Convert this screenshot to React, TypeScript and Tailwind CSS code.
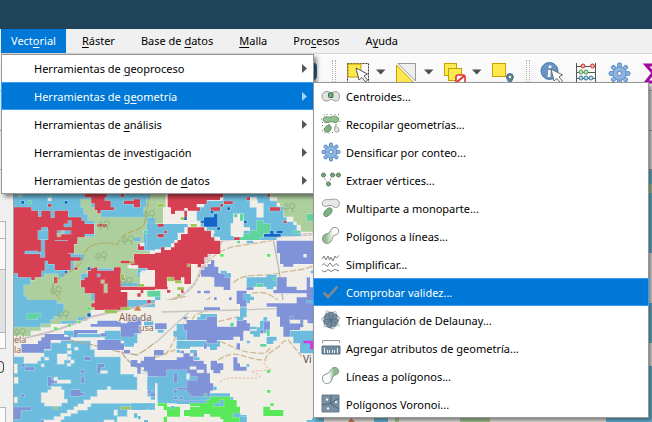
import React from 'react';
import { clsx } from 'clsx';

interface MenuEntry {
  label: string;
  // index of the underlined mnemonic letter
  at: number;
}

const MENUS: MenuEntry[] = [
  { label: 'Vectorial', at: 4 },
  { label: 'Ráster', at: 0 },
  { label: 'Base de datos', at: 8 },
  { label: 'Malla', at: 0 },
  { label: 'Procesos', at: 3 },
  { label: 'Ayuda', at: 1 },
];

const VECTOR_ITEMS: MenuEntry[] = [
  { label: 'Herramientas de geoproceso', at: 16 },
  { label: 'Herramientas de geometría', at: 17 },
  { label: 'Herramientas de análisis', at: 16 },
  { label: 'Herramientas de investigación', at: 16 },
  { label: 'Herramientas de gestión de datos', at: 27 },
];

const GEOMETRY_ITEMS: { label: string; icon: string }[] = [
  { label: 'Centroides...', icon: 'centroid' },
  { label: 'Recopilar geometrías...', icon: 'collect' },
  { label: 'Densificar por conteo...', icon: 'gear' },
  { label: 'Extraer vértices...', icon: 'vertices' },
  { label: 'Multiparte a monoparte...', icon: 'multipart' },
  { label: 'Polígonos a líneas...', icon: 'polyToLine' },
  { label: 'Simplificar...', icon: 'simplify' },
  { label: 'Comprobar validez...', icon: 'check' },
  { label: 'Triangulación de Delaunay...', icon: 'delaunay' },
  { label: 'Agregar atributos de geometría...', icon: 'ruler' },
  { label: 'Líneas a polígonos...', icon: 'lineToPoly' },
  { label: 'Polígonos Voronoi...', icon: 'voronoi' },
];

const Mnemonic: React.FC<MenuEntry> = ({ label, at }) => (
  <span>
    {label.slice(0, at)}
    <span className="underline underline-offset-2">{label[at]}</span>
    {label.slice(at + 1)}
  </span>
);

const TEETH = [0, 45, 90, 135, 180, 225, 270, 315];

const Gear = () => (
  <g fill="#8fb4e0" stroke="#4a7ebb" strokeWidth={0.8}>
    {TEETH.map(a => (
      <path key={a} d="M8.4 5L8.4 1.5Q10 0 11.600 1.500L11.600 5Z" transform={`rotate(${a} 10 10)`} />
    ))}
    <circle cx={10} cy={10} r={5.6} />
    <circle cx={10} cy={10} r={5.4} stroke="none" />
    <circle cx={10} cy={10} r={1.8} fill="#fff" />
  </g>
);

const ICONS: Record<string, React.ReactNode> = {
  centroid: (
    <>
      <path d="M1 10.500C1 7.500 3 5.500 6 5.500C8 5.500 9 6.500 10.500 6.500C12 6.500 13 5.500 15 5.500C17 5.500 18.500 7.500 18.500 10.500C18.500 13.500 17 15 15 15C13 15 12 13.500 10.500 13.500C9 13.500 8 15 6 15C3 15 1 13.500 1 10.500Z" fill="#e3e3e1" stroke="#999" />
      <rect x={7.5} y={7} width={4.5} height={4.5} rx={1} fill="#77b07c" stroke="#406b44" />
    </>
  ),
  collect: (
    <>
      <path d="M3 3.500C5 1.500 7 4 10 3C13 1.500 17 2 17.500 5C18 8.500 14 9.500 12 8C10 7 8 8.500 5 8.500C2 8 1.500 5 3 3.500Z" fill="#8fc08f" stroke="#698b69" />
      <path d="M5 12.500C8 10 11 12 10 15C9 18 6 19 4 17.500C2.500 16 3 14 5 12.500Z" fill="#7db37f" stroke="#698b69" />
      <path d="M14 12C16 11.500 18.500 15 18 17C17 18.500 14 18.500 13.500 16.500Z" fill="#e3e3e1" stroke="#999" />
      <path d="M3 .5v1M6 0v1M10 0v1M14 0v1M17 1l1-1M18.500 7l1 1M0 5h1M1 9l1-1M15 10v1M8 10v1M2 12l-1-1M1 17h1M3 19.500l1-1M8 19.500v-1M11 18l1 1" stroke="#777" />
    </>
  ),
  gear: <Gear />,
  vertices: (
    <g fill="#77ab7b" stroke="#57755a">
      <circle cx={2.5} cy={5} r={2} />
      <circle cx={11.5} cy={5} r={2} />
      <circle cx={17.5} cy={5} r={2} />
      <circle cx={7.5} cy={14} r={2} />
      <path d="M3.500 8l1 2M5.500 11v1M9 11l1-3M14 5h1" stroke="#aaa" />
    </g>
  ),
  multipart: (
    <>
      <path d="M2 3.500C4 .5 7 2 10 1.500C13 .5 17 1 18 4C19 7 17 10 14.500 9.500C12 9 11 7 8 7.500C5 8.500 2.500 9 1.500 7C1 5.500 1 4.500 2 3.500Z" fill="#e8e8e6" stroke="#999" />
      <path d="M5 12C7 9.500 10 9 11 11.500C11.500 14.500 8 18.500 5 18.500C2 18.500 2 14.500 5 12Z" fill="#7db37f" stroke="#698b69" />
    </>
  ),
  polyToLine: (
    <>
      <defs>
        <linearGradient id="ptl"><stop offset=".2" stopColor="#8dbb8d" /><stop offset=".7" stopColor="#fff" /></linearGradient>
      </defs>
      <path d="M3 9C6 7 8 8 9.500 4.500C11 1 15 .5 17 3C18.500 5.500 17.500 8.500 14 9C11 9.500 12 13 10 15.500C7.500 18.500 3 18 2 15C1 12.500 1.500 10.500 3 9Z" fill="url(#ptl)" stroke="#8a8f8a" />
    </>
  ),
  simplify: (
    <g fill="none" stroke="#7a7a7a">
      <path d="M1 5L3 2L5 6L7 2L8.500 6L10 3L12 7L14 2L15.500 4L18 1.500" />
      <path d="M1 11.500L3 9.500L6 12.500L9 9L12 12.500L15 9.500L18 12" />
      <path d="M1 16.500L4 18L7 15.500L10 17.500L14 15.500L18 17" />
    </g>
  ),
  check: <path d="M2.500 10.500L7 15L16.500 4.500" fill="none" stroke="#87878b" strokeWidth={2.6} />,
  delaunay: (
    <>
      <path d="M6 2L14 2.500L18 8L16 15L11 18.500L4 16L2 9Z" fill="#728b9e" stroke="#5d7688" />
      <path d="M6 2L10 10L18 8M2 9L10 10L11 18.500M10 10L4 16M10 10L14 2.500M10 10L16 15" fill="none" stroke="#526a7d" strokeWidth={0.8} />
      <g fill="#eee" stroke="#aaa" strokeWidth={0.6}>
        <circle cx={6} cy={2} r={1.3} /><circle cx={14} cy={2.5} r={1.3} /><circle cx={17.5} cy={8} r={1.3} />
        <circle cx={17} cy={15} r={1.3} /><circle cx={12} cy={18} r={1.3} /><circle cx={4} cy={16} r={1.3} /><circle cx={1.8} cy={9} r={1.3} />
      </g>
    </>
  ),
  ruler: (
    <>
      <path d="M1.500 5V2.500H18.500V5" fill="none" stroke="#999" />
      <path d="M1 8H19V16H1Z" fill="#728b9e" stroke="#5d7688" />
      <path d="M3.500 15v-5M6.500 15v-3M8.500 15v-3M11.500 15v-3M13.500 15v-3M16.500 15v-5" stroke="#eee" />
    </>
  ),
  lineToPoly: (
    <>
      <defs>
        <linearGradient id="ltp"><stop offset=".4" stopColor="#fff" /><stop offset=".7" stopColor="#8dbb8d" /></linearGradient>
      </defs>
      <path d="M3 9C6 7 8 8 9.500 4.500C11 1 15 .5 17 3C18.500 5.500 17.500 8.500 14 9C11 9.500 12 13 10 15.500C7.500 18.500 3 18 2 15C1 12.500 1.500 10.500 3 9Z" fill="url(#ltp)" stroke="#8a8f8a" />
    </>
  ),
  voronoi: (
    <>
      <path d="M1 1H18V18H1Z" fill="#768fa2" stroke="#6a8090" />
      <path d="M10 1L9.500 9.500L1 11M9.500 9.500L18 15M9.500 9.500L18 4" fill="none" stroke="#4e6577" />
      <g fill="#eee"><circle cx={6} cy={5.5} r={1.2} /><circle cx={15} cy={8} r={1.2} /><circle cx={7} cy={14.5} r={1.2} /></g>
    </>
  ),
};

const ToolButton: React.FC<{ label: string; children: React.ReactNode; wide?: boolean }> = ({ label, children, wide }) => (
  <button type="button" aria-label={label} className={clsx('flex items-center', wide ? 'w-12 gap-1.5' : 'w-8')}>
    <svg width={24} height={24} viewBox="0 0 24 24" className="shrink-0">{children}</svg>
    {wide && (
      <svg width={10} height={6} viewBox="0 0 10 6" className="shrink-0"><path d="M0 0.500H9.500L4.750 5.500Z" fill="#4d4d4d" /></svg>
    )}
  </button>
);

const Grip = () => <div className="h-6 w-1 border-x border-dotted border-[#b0b0b0]" />;

const POINTER = 'M10 8L13 20L16 17.500L19.500 22L21.500 20L18 16L21.500 14Z';

const Toolbar = () => (
  <div className="border-t border-[#d5d5d5] bg-linear-to-b from-[#fbfbfb] to-[#efefef]">
    <div className="flex h-[37px] items-center overflow-hidden border-b border-[#bbb] pl-[307px]">
      <svg width={20} height={24} viewBox="0 0 20 24" className="shrink-0">
        <path d="M2 3H7Q10 3 10 7V15Q10 20 6 20H2Z" fill="#346391" />
      </svg>
      <div className="flex items-center pl-[5px]">
        <Grip />
        <div className="flex items-center pl-2.5">
          <ToolButton label="Seleccionar" wide>
            <rect x={1.5} y={3.5} width={21} height={19} fill="none" stroke="#333" strokeDasharray="2 1" />
            <rect x={2} y={4} width={13} height={13} fill="#fce94f" stroke="#c4a000" />
            <path d={POINTER} fill="#fff" stroke="#555" />
          </ToolButton>
          <ToolButton label="Invertir" wide>
            <path d="M4 3.500H21.500V21Z" fill="#eee" stroke="#999" />
            <path d="M2.500 5V23H20Z" fill="#fce94f" stroke="#c4a000" />
          </ToolButton>
          <ToolButton label="Deseleccionar" wide>
            <rect x={2.5} y={3.5} width={12} height={12} fill="#fce94f" stroke="#c4a000" />
            <rect x={6.5} y={8.5} width={13} height={12} fill="#fce94f" stroke="#c4a000" />
            <rect x={14} y={15} width={9} height={9} rx={2} fill="#fff" stroke="#d33" strokeWidth={1.6} />
            <path d="M15 22L22 16" stroke="#d33" strokeWidth={2} />
          </ToolButton>
          <ToolButton label="Seleccionar por localización">
            <rect x={2.5} y={3.5} width={13} height={13} fill="#fce94f" stroke="#c4a000" />
            <path d="M20 24C18 20 16.500 19 16.500 17A3.300 3.300 0 0 1 23.300 17C23.300 19 22 20 20 24Z" fill="#5d8295" stroke="#45697b" />
            <circle cx={20} cy={17} r={1.2} fill="#fff" />
          </ToolButton>
        </div>
      </div>
      <div className="flex items-center gap-[2px] pl-1">
        <Grip />
        <div className="flex items-center gap-[2px] pl-2">
          <ToolButton label="Identificar">
            <circle cx={9.5} cy={11} r={8.5} fill="#6793c5" stroke="#4878ae" />
            <path d="M10 5.500v2.500M9.500 10L9 17" stroke="#fff" strokeWidth={2.6} />
            <path d={POINTER} fill="#fff" stroke="#666" transform="translate(1 1)" />
          </ToolButton>
          <ToolButton label="Calculadora">
            <path d="M2.500 3V24M21.500 3V24M2 6.500H22M2 12.500H22M2 18.500H22M2 22.500H22" stroke="#555" fill="none" />
            <g stroke="#c33" fill="#f3b0a8"><circle cx={9} cy={6} r={2} /><circle cx={18.5} cy={6} r={2} /></g>
            <g stroke="#4a9a4a" fill="#c6e6c0"><circle cx={7} cy={12} r={2} /><circle cx={12} cy={12} r={2} /></g>
            <g stroke="#3a77a0" fill="#bcd6ea"><circle cx={7} cy={18} r={2} /><circle cx={12} cy={18} r={2} /><circle cx={17} cy={18} r={2} /></g>
          </ToolButton>
          <ToolButton label="Caja de herramientas">
            <g transform="translate(0 2) scale(1.150)"><Gear /></g>
          </ToolButton>
          <ToolButton label="Estadísticas">
            <path d="M20 5H4L11 13L4 22H20" fill="none" stroke="#a20aa2" strokeWidth={3} />
          </ToolButton>
        </div>
      </div>
    </div>
    <div className="h-10 border-b border-[#aaa] bg-[#ededed]" />
    <div className="h-[39px] border-b border-[#aaa] bg-[#ededed]" />
  </div>
);

// Raster classes of the land cover layer
const C = {
  water: '#6bbcdd',
  red: '#d64052',
  green: '#adcf9d',
  purple: '#8092d8',
  deep: '#1565c8',
  mint: '#5fd59d',
  lime: '#59e85a',
  olive: '#9cc65a',
  base: '#f1eee8',
};

const Cells: React.FC<{ fill: string; d: string }> = ({ fill, d }) => (
  <path d={d} fill={fill} stroke="#fff" strokeOpacity={0.3} strokeWidth={4} paintOrder="stroke" />
);

// Turns "x,y,w,h x,y,w,h" into one path
const boxes = (list: string) =>
  list.split(' ').map(b => {
    const [x, y, w, h] = b.split(',');
    return `M${x} ${y}h${w}v${h}h-${w}z`;
  }).join('');

const Tree = ({ x, y }: { x: number; y: number }) => (
  <g transform={`translate(${x} ${y})`} fill="none" stroke="#8fb383" strokeWidth={3}>
    <path d="M0 16L8 0L16 16ZM8 16V26M28 14V26" />
    <circle cx={26} cy={8} r={8} />
  </g>
);

const NorthWest = () => (
  <>
    <rect width={480} height={348} fill={C.water} />
    <Cells fill={C.base} d="M480 182H450V192H402V222H390V232H440V248H420V290H362V348H480Z" />
    <Cells fill={C.green} d="M243 28H272V52H302V82H432V52H440V28H452V0H480V82H440V120H430V160H412V182H450V192H402V222H390V232H412V262H420V278H362V235H272V250H243V292H254V310H272V348H184V338H164V330H82V318H72V285H92V268H104V262H134V252H174V262H194V252H204V240H222V212H252V192H222V160H232V140H284V92H264V72H252V52H243Z" />
    <Cells
      fill={C.red}
      d={
        'M42 52H94V62H114V80H124V62H152V84H164V62H204V82H244V92H254V102H282V112H292V102H320V112H282V132H254V142H232V162H222V152H214V162H204V150H164V122H144V112H124V122H114V148H122V182H74V192H122V202H134V242H124V262H104V270H94V262H54V250H42Z' +
        'M114 150H144V122H164V152H204V192H212V202H242V212H212V240H164V222H144V212H134V185H114Z' +
        'M284 232H292V242H342V232H362V290H480V300H430V310H422V300H362V306H382V348H284V310H254V292H243V270H254V262H264V242H272V235H284Z' +
        'M402 192H480V240H442V234H392V212H402ZM254 0H320V22H314V32H332V52H342V60H302V70H292V60H284V40H274V22H254Z' +
        boxes('362,212,30,8 414,162,18,18 372,32,30,10 402,28,18,24 362,8,10,12 144,42,10,8 204,152,18,38 162,262,10,18 224,232,8,8 412,310,10,10')
      }
    />
    <Cells fill={C.water} d={boxes('114,122,30,26 204,92,10,18 192,102,18,8 122,192,12,10 124,150,10,42 172,122,40,10 402,142,20,12 440,100,40,80 292,252,8,8')} />
    <Cells fill={C.base} d={boxes('144,24,10,8 420,160,12,8 384,226,30,8 424,242,16,6')} />
    <Cells fill={C.deep} d={boxes('64,33,8,8 194,33,8,8 194,242,8,8 263,232,8,8')} />
    <Cells fill={C.mint} d={boxes('84,33,10,8 432,122,10,8 442,302,38,18 144,12,8,8')} />
    <Cells fill={C.green} d={boxes('172,132,10,8 184,122,8,8 312,282,10,26 303,270,10,10 54,12,10,8')} />
    <Cells fill={C.olive} d={boxes('414,282,18,8 390,212,12,8 362,252,10,18')} />
    <path d="M450 10L440 60L434 100C420 130 370 115 352 164C330 155 270 155 256 185L242 220C210 255 150 260 158 300L194 348" fill="none" stroke="#b29b4a" strokeWidth={4} strokeOpacity={0.6} strokeDasharray="22 4" />
    <Tree x={294} y={93} /><Tree x={366} y={138} /><Tree x={286} y={186} /><Tree x={362} y={262} /><Tree x={150} y={290} /><Tree x={430} y={62} />
  </>
);

const NorthEast = () => (
  <>
    <rect width={480} height={348} fill={C.base} />
    <path d="M0 346C60 330 110 310 130 260C150 200 170 190 205 150L480 132" fill="none" stroke="#cbbfc4" strokeWidth={7} />
    <path d="M0 346C60 330 110 310 130 260C150 200 170 190 205 150L480 132" fill="none" stroke="#fff" strokeWidth={2} strokeDasharray="8 6" />
    <path d="M355 150L372 240L386 348" fill="none" stroke="#b8b8b8" strokeWidth={4} />
    <path d="M130 262C160 195 200 180 235 170L350 152M235 278C270 245 320 262 370 250C400 240 430 245 475 228M0 338L100 318M130 348L170 320M290 310C340 300 350 320 395 348" fill="none" stroke="#c6aa78" strokeWidth={4} strokeDasharray="20 5" strokeOpacity={0.75} />
    <Cells fill={C.green} d="M0 0H32V52H24V102H0ZM345 0H480V125H437V105H425V95H415V80H385V50H375V40H355V22H345Z" />
    <Cells
      fill={C.water}
      d={
        'M205 0H345V30H365V50H385V82H395V95H415V105H425V122H437V138H365V150H245V142H265V122H285V112H265V72H235V100H227V138H237V150H195V140H175V122H155V110H137V92H125V52H147V32H205Z' +
        'M0 102H98V112H88V128H68V150H58V160H48V172H30V178H0Z'
      }
    />
    <Cells fill={C.base} d={boxes('285,22,20,30 297,30,10,22 305,40,20,42 345,22,20,10 98,62,22,38 158,122,20,8 237,72,28,68')} />
    <Cells
      fill={C.red}
      d={
        'M38 0H205V22H195V30H155V42H125V52H135V62H98V54H88V62H60V72H48V52H38Z' +
        'M98 112H148V122H168V142H178V152H196V192H158V202H148V222H138V232H128V222H108V282H88V262H78V272H50V262H36V290H0V188H18V172H28V180H48V172H58V158H68V150H78V132H98Z' +
        boxes('88,62,8,28 8,102,18,8 28,122,8,8 8,132,18,10 237,142,18,8 345,52,30,10 207,34,26,8 275,22,10,8 337,12,8,8 386,92,8,8 0,290,38,8 36,300,10,8 78,300,8,8 167,52,28,10 196,42,8,8')
      }
    />
    <Cells fill={C.deep} d={'M137 92H147V82H177V72H187V110H147V98H137Z' + boxes('167,62,8,8 217,52,8,8 267,92,8,8 87,82,8,8 187,112,8,8 327,132,50,8 345,122,10,10 365,122,18,8')} />
    <Cells fill={C.mint} d={'M255 150V142H265V132H285V122H305V92H325V102H345V130H325V142H315V150Z' + boxes('237,72,10,10 255,72,10,20 455,72,20,20 415,122,20,8 247,152,8,8 0,302,16,20')} />
    <Cells
      fill={C.purple}
      d={
        'M365 152H475V222H415V230H385V222H375V190H365ZM168 210H178V230H190V250H226V300H206V290H178V262H168V260H138V240H148V230H158V222H168ZM365 262H395V290H425V300H455V292H475V348H425V322H455V310H425V310H355V300H365ZM245 302H275V348H245Z' +
        boxes('127,302,10,8 147,302,18,8 177,322,8,8 222,322,8,8 455,262,10,30 395,330,20,18')
      }
    />
    <Cells fill={C.water} d={'M275 262H335V254H365V290H355V298H335V290H295V300H275Z' + boxes('197,242,18,8 210,250,18,12 265,312,22,36 287,320,10,18 467,242,8,8 275,152,20,8 0,320,16,10')} />
    <Cells fill={C.purple} d={boxes('275,292,20,8 287,338,20,10')} />
    <Cells fill={C.mint} d={boxes('305,282,20,8 355,262,8,8')} />
    <Cells fill={C.olive} d={boxes('8,42,18,8 107,102,18,8 77,82,10,8 97,222,8,8 37,262,20,12 60,272,20,8 67,292,20,8 67,312,8,8')} />
    <Cells fill={C.lime} d={boxes('196,192,10,8 336,192,10,8')} />
    <rect x={445} y={192} width={10} height={10} fill={C.base} />
    <Tree x={385} y={40} />
  </>
);

const SouthWest = () => (
  <>
    <rect width={480} height={366} fill={C.water} />
    <Cells fill={C.base} d="M42 104H92V92H122V82H152V72H232V62H262V50H272V30H284V22H480V240H442V220H412V230H402V222H362V170H284V148H272V122H222V120H182V128H152V150H122V160H132V170H122V182H112V190H72V170H42Z" />
    <path d="M42 118C120 110 200 82 275 50C340 35 400 25 480 5" fill="none" stroke="#c9bbbf" strokeWidth={6} />
    <path d="M200 120C280 130 320 150 365 156L410 165C440 150 460 130 480 115M365 156C380 185 410 205 440 215" fill="none" stroke="#b9ab93" strokeWidth={4} strokeDasharray="24 4" />
    <Cells fill={C.green} d="M172 0H284V30H272V40H262V50H232V62H182V72H152V82H122V92H92V108H42V82H122V72H152V60H162V50H182V40H192V10H172Z" />
    <Cells fill={C.red} d="M284 0H382V30H284V22H274V10H284ZM442 0H452V10H442Z" />
    <Cells fill={C.water} d="M192 92H234V102H314V92H362V100H392V100H412V130H402V140H372V122H314V112H204V105H192ZM432 52H450V62H460V82H432Z" />
    <Cells
      fill={C.purple}
      d={
        'M272 72H292V62H362V70H382V52H424V100H402V110H362V80H272ZM134 102H192V110H212V120H152V148H132V158H64V132H114V122H124V112H134ZM292 120H362V130H372V150H292ZM222 90H292V100H232V112H222ZM422 182H432V170H480V230H442V212H432V202H422ZM392 180H412V190H422V230H412V200H392Z' +
        boxes('64,192,10,8 74,202,28,8 254,170,18,10 294,192,18,10 292,202,10,16 244,210,8,10 144,230,10,28 164,232,8,18 152,240,10,10 244,232,8,18 64,282,8,8 212,270,30,18 242,278,10,8 42,322,52,8 42,330,20,28 264,310,8,8 442,270,10,10 462,150,18,20 452,280,18,8 124,360,8,6 302,100,18,8 372,150,18,10')
      }
    />
    <Cells
      fill={C.base}
      d={
        'M124 278H144V270H154V260H184V270H192V298H202V308H184V318H134V308H124ZM292 270H412V260H412V222H442V290H452V300H470V310H272V320H262V330H232V340H212V348H192V358H182V366H132V360H162V350H182V340H202V330H222V320H234V312H252V300H272V290H292ZM42 192H52V220H42ZM42 232H54V250H42ZM172 240H212V250H172Z' +
        boxes('172,162,30,18 172,180,20,12 202,152,12,10 204,170,8,10 212,180,10,10 202,190,10,8 224,142,10,8 202,132,10,12 134,172,12,8 124,192,8,8 42,292,10,16 342,330,10,16 382,330,98,36 352,350,40,16 312,360,30,6 302,212,20,8 322,260,10,10 162,232,10,10')
      }
    />
    <Cells fill={C.water} d={'M392 310H470V320H440V330H392Z' + boxes('442,230,38,40 402,340,10,14 414,348,8,10 432,360,12,6 432,320,10,8')} />
    <Cells fill={C.mint} d="M82 40H122V50H112V58H82Z" />
    <Cells fill={C.lime} d={boxes('162,82,10,8 204,72,8,8 234,62,8,8 262,22,10,8 262,42,10,8 472,310,8,8')} />
    <Cells fill={C.deep} d={boxes('262,40,10,10')} />
    <Cells fill={C.olive} d={boxes('314,30,38,10 362,22,28,8 162,320,10,8 362,320,30,8')} />
    <Tree x={172} y={32} /><Tree x={42} y={85} />
    <path d="M402 32L413 16L424 32Z" fill="#d2804a" />
  </>
);

const SouthEast = () => (
  <>
    <rect width={480} height={366} fill={C.base} />
    <path d="M20 36L245 30L365 26M0 130L100 38" fill="none" stroke="#c4c4c4" strokeWidth={4} />
    <path d="M30 165C60 130 60 100 100 50M0 172L60 150L120 45L160 30M190 65L250 50M196 125C240 140 250 160 330 160L350 140M190 180C250 140 260 180 330 180C340 150 370 150 385 125L400 120L440 170" fill="none" stroke="#c6aa78" strokeWidth={4} strokeDasharray="18 6" strokeOpacity={0.75} />
    <path d="M195 245C230 220 260 245 315 230C300 210 250 215 350 210C330 200 320 190 335 180" fill="none" stroke="#f3c0b8" strokeWidth={4} strokeDasharray="7 5" />
    <Cells fill={C.water} d="M126 52H136V42H186V52H155V60H95V80H85V90H95V120H65V110H55V92H65V72H105V62H126ZM255 22H275V52H265V62H245V50H255ZM325 52H337V62H345V90H315V62H325ZM285 102V92H305V82H335V100H315V110H295V102ZM405 92H475V160H435V130H415V110H405ZM335 110H365V122H355V132H335ZM65 122H195V140H186V150H165V140H105V146H65ZM0 90H26V98H8V90H0Z" />
    <Cells
      fill={C.purple}
      d={
        'M335 10H425V0H475V70H445V82H435V90H405V110H385V80H375V50H365V20H335ZM155 60H155V50H186V80H245V62H265V60H275V70H285V92H265V122H255V110H235V120H186V130H155V120H95V90H85V72H95V60ZM245 0H275V20H255V12H245Z' +
        'M0 180H65V172H85V160H105V150H126V170H116V182H146V192H155V220H165V250H175V272H165V310H55V300H8V230H0ZM167 182H186V190H205V210H196V220H175V210H167ZM235 172H247V190H255V200H275V212H235ZM0 150H26V166H0Z'
      }
    />
    <Cells
      fill={C.water}
      d={
        'M35 210H95V220H105V230H126V240H95V262H65V270H95V280H105V290H155V300H65V310H8V250H0V230H35ZM165 280H225V292H235V312H65V302H155V290H165Z' +
        boxes('105,150,18,8 65,150,10,8 275,122,10,8 285,80,20,8 326,52,10,10 455,0,20,8 175,260,10,10 275,0,10,10 275,192,8,8 455,360,20,6 255,345,20,21 116,172,18,8')
      }
    />
    <Cells fill={C.purple} d={boxes('147,22,48,8 85,50,10,8 0,70,35,18 147,130,8,16 245,130,10,18 57,220,10,28 57,270,8,8 57,290,8,8 75,290,8,8 77,152,10,8 316,90,8,10 327,65,18,24 405,50,10,10')} />
    <Cells
      fill={C.lime}
      d={
        'M165 290H225V300H245V320H255V366H205V358H196V350H165V342H147V350H105V320H135V310H155V300H165ZM325 320H345V330H385V348H325ZM8 310H36V320H75V350H36V330H26V318H8ZM87 330H105V348H87ZM26 350H36V366H26Z' +
        boxes('336,210,10,8 336,270,10,8 346,310,10,8 105,310,30,8')
      }
    />
    <Cells fill={C.water} d={boxes('176,310,30,8 196,300,10,12 235,340,22,12 48,318,10,8 255,350,20,16')} />
    <Cells fill={C.mint} d={boxes('226,68,10,12 336,90,8,18 316,132,18,8 147,282,8,8')} />
    <Cells fill={C.base} d={boxes('405,60,30,10 445,60,12,12 126,210,20,8 95,222,8,16 105,200,18,8 105,160,10,8')} />
    <path d="M445 122H475V148H465V130H445Z" fill="#d63be3" />
  </>
);

const MapCanvas = () => (
  <svg className="absolute inset-0 h-full w-full" viewBox="14 170 638 252" preserveAspectRatio="xMinYMin slice">
    <rect x={13} y={170} width={639} height={252} fill={C.base} />
    <svg x={0} y={190} width={160} height={116} viewBox="0 0 480 348"><NorthWest /></svg>
    <svg x={155} y={190} width={160} height={116} viewBox="0 0 480 348"><NorthEast /></svg>
    <svg x={0} y={300} width={160} height={122} viewBox="0 0 480 366"><SouthWest /></svg>
    <svg x={155} y={300} width={160} height={122} viewBox="0 0 480 366"><SouthEast /></svg>
    <path d="M645 170h7v14h-7zM645 193h7v60h-7zM645 303h7v40h-7zM645 366h7v56h-7zM312 418h12v4h-12zM374 418h14v4h-14zM606 418h46v4h-46z" fill={C.water} />
    <path d="M645 184h7v9h-7zM395 418h4v4h-4zM460 418h30v4h-30z" fill={C.green} />
    <path d="M348 422l3-4l4 4z" fill="#d2804a" />
    <g fontFamily="'Open Sans', sans-serif" fontSize={9} fill="#8a5f48" stroke="#f6f1ea" strokeWidth={2} paintOrder="stroke" strokeOpacity={0.7}>
      <text fontSize={10}>
        <tspan x={119} y={321}>Alto da</tspan>
        <tspan x={139} y={331} fontSize={9}>usa</tspan>
      </text>
      <text>
        <tspan x={14} y={343}>ela</tspan>
        <tspan x={14} y={353}>la</tspan>
      </text>
      <text x={303} y={363} fontSize={10} fill="#444">Vi</text>
    </g>
  </svg>
);

const SidePanel = () => (
  <div className="flex w-3.5 shrink-0 flex-col border-r border-[#a5a5a5] bg-[#f0f0f0] pt-[51px]">
    <div className="w-1.5 border border-l-0 border-[#b5b5b5]">
      <div className="h-4 bg-[#f6f6f6]" />
      <div className="h-8 border-y border-[#b5b5b5] bg-[#f8f8f8]" />
      <div className="h-[62px] bg-[#e2e2e2]" />
      <div className="h-4 border-t border-[#b5b5b5] bg-[#fbfbfb]" />
    </div>
    <div className="mt-3 h-3 w-1 rounded-r border border-l-0 border-[#444]" />
    <div className="mt-[34px] w-1.5 flex-1 border border-b-0 border-l-0 border-[#b5b5b5] bg-[#fbfbfb]" />
  </div>
);

const POPUP =
  'absolute bg-white shadow-[3px_3px_4px_rgba(0,0,0,0.45)] before:pointer-events-none before:absolute before:inset-0 before:border before:border-[#979797]';
const ROW = 'relative flex h-7 w-full items-center border text-left';
const ACTIVE = 'border-[#3ba0f5] bg-[#0078d7] text-white';
const IDLE = 'border-transparent text-black';

const GeometryMenu = () => (
  <div role="menu" className={clsx(POPUP, 'left-[312px] top-7 w-[336px]')}>
    {GEOMETRY_ITEMS.map(item => (
      <button
        key={item.icon}
        type="button"
        role="menuitem"
        className={clsx(ROW, 'gap-[5px] pl-[7px]', item.icon === 'check' ? ACTIVE : IDLE)}
      >
        <svg width={20} height={20} viewBox="0 0 20 20" className="shrink-0">{ICONS[item.icon]}</svg>
        <span className="pt-px">{item.label}</span>
      </button>
    ))}
  </div>
);

const VectorMenu = () => (
  <div role="menu" className={clsx(POPUP, 'left-px top-[54px] w-[313px]')}>
    {VECTOR_ITEMS.map((item, i) => (
      <button
        key={item.label}
        type="button"
        role="menuitem"
        className={clsx(ROW, 'justify-between pl-8 pr-1.5 pt-px', i === 1 ? ACTIVE : IDLE)}
      >
        <Mnemonic {...item} />
        <svg width={5} height={9} viewBox="0 0 5 9"><path d="M0 0L5 4.500L0 9Z" fill={i === 1 ? '#a9d3f5' : '#555'} /></svg>
      </button>
    ))}
    <GeometryMenu />
  </div>
);

export default function App() {
  return (
    <div className="relative flex min-h-screen flex-col overflow-hidden bg-[#f0f0f0] font-['Noto_Sans','Open_Sans',sans-serif] text-[11px] leading-4">
      <div className="h-[29px] bg-[#1f4359]" />
      <nav className="flex h-6 gap-1.5 bg-[#f0f0f0] pl-px">
        {MENUS.map((menu, i) => (
          <button
            key={menu.label}
            type="button"
            className={clsx('px-2.5', i === 0 ? 'bg-[#0078d7] text-white' : 'text-black')}
          >
            <Mnemonic {...menu} />
          </button>
        ))}
      </nav>
      <Toolbar />
      <main className="flex flex-1">
        <SidePanel />
        <div className="relative min-h-[252px] flex-1 overflow-hidden">
          <MapCanvas />
        </div>
      </main>
      <VectorMenu />
    </div>
  );
}
